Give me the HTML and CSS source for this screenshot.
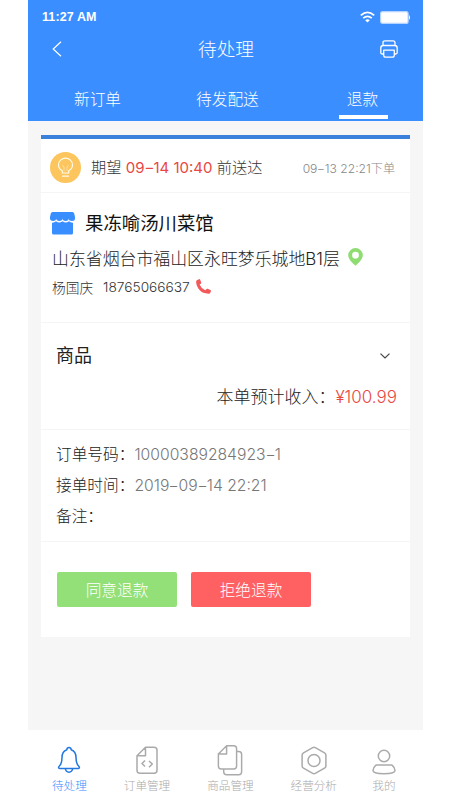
FILE: index.html
```html
<!DOCTYPE html>
<html lang="zh-CN">
<head>
<meta charset="utf-8">
<title>待处理</title>
<link rel="stylesheet" href="styles.css">
</head>
<body>
<div class="phone">
  <header class="header">
    <div class="status">
      <span class="clock">11:27 AM</span>
      <div class="status-icons">
        <svg width="15" height="12" viewBox="0 0 15 12" fill="none" stroke="#fff" stroke-width="1.7"><path d="M.8 4.4Q7.5-1.6 14.2 4.4M3.2 7.2q4.300-3.700 8.600 0"/><path d="M5.200 9.200q2.300-1.800 4.600 0L7.500 11.500z" fill="#fff" stroke="none"/></svg>
        <svg width="31" height="13" viewBox="0 0 31 13"><rect x=".6" y=".6" width="27.500" height="11.800" rx="2" fill="#fff" stroke="#b5d5ff" stroke-width="1.200"/><path d="M29 4q2 2.500 0 5z" fill="#fff"/></svg>
      </div>
    </div>
    <div class="titlebar">
      <svg class="back" width="10" height="16" viewBox="0 0 10 16" fill="none" stroke="#fff" stroke-width="1.200"><path d="M9 .7 1.200 8 9 15.300"/></svg>
      <h1>待处理</h1>
      <svg width="18" height="18" viewBox="0 0 18 18" fill="none" stroke="#fff" stroke-width="1.300" stroke-linejoin="round"><path d="M3 5.200V2.800Q3 .8 5 .8h8q2 0 2 2v2.400M3.200 14H2.300Q.8 14 .8 12.500V8q0-2.500 2.500-2.500h11.400q2.500 0 2.500 2.500v4.500q0 1.500-1.500 1.500h-.9M3.700 10.200h10.600v5q0 1.900-1.900 1.900H5.600q-1.900 0-1.900-1.900z"/></svg>
    </div>
    <nav class="tabs">
      <span class="tab">新订单</span>
      <span class="tab">待发配送</span>
      <span class="tab active">退款</span>
    </nav>
  </header>

  <main class="content">
    <article class="card">
      <section class="expect">
        <svg width="31" height="31" viewBox="0 0 31 31"><circle cx="15.500" cy="15.500" r="15.500" fill="#fcc55d"/><g fill="none" stroke="#fffbe8" stroke-width="1.200" stroke-linecap="round" stroke-linejoin="round"><path d="M12.300 21v-2.200C10 17.500 8.500 15.500 8.500 13a7 6.800 0 0 1 14 0c0 2.500-1.500 4.500-3.800 5.800V21zM12.500 24.200h6"/><path d="M14 18.500v-3.500l-1.300-1.500M17 18.500v-3.500l1.300-1.500" stroke-width=".5"/></g></svg>
        <p class="expect-text">期望 <b class="num">09<i>-</i>14 10:40</b> 前送达</p>
        <span class="placed"><span class="num">09<i>-</i>13 22:21</span>下单</span>
      </section>
      <section class="store">
        <div class="store-name">
          <svg width="25" height="23" viewBox="0 0 25 23" fill="#398eff"><path d="M2.500 0h20Q23.800 0 24.200 1.500L25 5v1.500a3.100 2.500 0 0 1-6.200 0 3.150 2.500 0 0 1-6.300 0 3.150 2.500 0 0 1-6.300 0A3.100 2.500 0 0 1 0 6.500V5L.8 1.500Q1.200 0 2.500 0z"/><path d="M2 10.700q2.400.2 4-1.400 3.200 2.600 6.500 0 3.300 2.600 6.500 0 1.600 1.600 4 1.400V21q0 1.500-1.500 1.500h-18Q2 22.500 2 21z"/></svg>
          <h2>果冻喻汤川菜馆</h2>
        </div>
        <div class="address">
          <span>山东省烟台市福山区永旺梦乐城地<span class="num">B1</span>层</span>
          <svg width="15" height="18" viewBox="0 0 15 18"><path d="M7.500 0A7.300 7.300 0 0 1 14.800 7.300C14.800 11.500 10 15.500 7.500 17.700 5 15.500.2 11.500.2 7.300A7.300 7.300 0 0 1 7.500 0zm0 3.800a3.400 3.400 0 1 0 0 6.800 3.400 3.400 0 0 0 0-6.800z" fill="#8fdd72" fill-rule="evenodd"/></svg>
        </div>
        <div class="person">
          <span>杨国庆</span><span class="num tel">18765066637</span>
          <svg width="15" height="15" viewBox="0 0 15 15" fill="#f2595b"><path d="M1.300.9 3 .2q.8-.3 1.200.5l1 2.800q.2.700-.4 1.200L3.600 5.600q1.600 4 5.600 5.700l1.300-1.300q.6-.5 1.200-.2l2.700 1.300q.7.400.5 1.200l-.6 1.400q-.4.900-1.400 1Q6 14.800 2.300 9.500-.3 5.500.2 2.300q.2-1 1.100-1.400z"/></svg>
        </div>
      </section>
      <section class="goods">
        <div class="goods-head">
          <h3>商品</h3>
          <svg width="10" height="6" viewBox="0 0 10 6" fill="none" stroke="#444" stroke-width="1.200"><path d="M.5.6 5 5 9.500.6"/></svg>
        </div>
        <p class="income">本单预计收入：<span class="num">¥100.99</span></p>
      </section>
      <section class="info">
        <p>订单号码：<span class="num">10000389284923<i>-</i>1</span></p>
        <p>接单时间：<span class="num">2019<i>-</i>09<i>-</i>14 22:21</span></p>
        <p>备注：</p>
      </section>
      <section class="actions">
        <button class="btn agree">同意退款</button>
        <button class="btn refuse">拒绝退款</button>
      </section>
    </article>
  </main>

  <footer class="nav">
    <div class="nav-item current">
      <svg width="24" height="28" viewBox="0 0 24 28" fill="none" stroke="#2478e0" stroke-width="1.500" stroke-linejoin="round"><path d="M9.800 3.200Q10 1 12 1t2.200 2.200Q19 5 19 11q0 6.500 3 9 .6.700.3 1.400-.3.700-1.200.7H2.900q-.9 0-1.200-.7-.3-.7.300-1.400 3-2.500 3-9 0-6 4.800-7.800z"/><path d="M8.300 22.200q.7 3.500 3.700 3.500t3.700-3.500"/></svg>
      <span>待处理</span>
    </div>
    <div class="nav-item">
      <svg width="24" height="28" viewBox="0 0 24 28" fill="none" stroke="#aaa" stroke-width="1.500" stroke-linejoin="round"><path d="M10.500.8H19q3 0 3 3v20q0 3-3 3H5q-3 0-3-3V9.300zM10.500.8v8.500H2M10 14l-3 3 3 3M14 14.500l3.300 3-3.300 3.300"/></svg>
      <span>订单管理</span>
    </div>
    <div class="nav-item">
      <svg width="26" height="32" viewBox="0 0 26 32" fill="none" stroke="#aaa" stroke-width="1.500" stroke-linejoin="round"><path d="M9.500.8h7.300q3 0 3 3v18q0 3-3 3H4q-3 0-3-3V9.300zM9.500.8v8.500H1M19.800 6.700H22q3 0 3 3v18q0 3-3 3H9.500q-3 0-3-3v-2.900"/></svg>
      <span>商品管理</span>
    </div>
    <div class="nav-item">
      <svg width="26" height="28" viewBox="0 0 26 28" fill="none" stroke="#aaa" stroke-width="1.500" stroke-linejoin="round"><path d="M11.700 1.200q1.300-.7 2.600 0l9.200 5.100q1.400.8 1.400 2.300v10.800q0 1.500-1.400 2.300l-9.200 5.100q-1.300.7-2.600 0l-9.200-5.100q-1.400-.8-1.400-2.300V8.600q0-1.500 1.400-2.300z"/><circle cx="13" cy="14" r="6"/></svg>
      <span>经营分析</span>
    </div>
    <div class="nav-item">
      <svg width="24" height="28" viewBox="0 0 24 28" fill="none" stroke="#aaa" stroke-width="1.500" stroke-linejoin="round"><circle cx="12" cy="9.500" r="5.700"/><path d="M4 18.600h16q3 2.400 3 5.400 0 3.200-11 3.200T1 24q0-3 3-5.400z"/></svg>
      <span>我的</span>
    </div>
  </footer>
</div>
</body>
</html>
```
FILE: styles.css
```css
* { box-sizing: border-box; margin: 0; padding: 0; }
body {
  background: #fff;
  font-family: "Noto Sans CJK SC", sans-serif;
  font-weight: 300;
  color: #222;
}
svg { display: block; flex: none; }
.phone { width: 395px; height: 800px; margin-left: 28px; display: flex; flex-direction: column; white-space: nowrap; }
.num { font-family: Inter, "Liberation Sans", sans-serif; font-weight: 300; }
.num i { display: inline-block; font-style: normal; transform: scaleX(1.5); margin: 0 1px; }

.header { height: 121px; background: #3a8eff; color: #fff; }
.status { height: 34px; padding: 0 12px 0 14px; display: flex; align-items: center; justify-content: space-between; }
.clock { font: 700 12.500px/34px "Liberation Sans", sans-serif; letter-spacing: .1px; }
.status-icons { display: flex; align-items: center; gap: 5px; }
.titlebar { height: 30px; padding: 0 25px 0 24px; display: flex; align-items: center; justify-content: space-between; }
.titlebar h1 { font-size: 18.700px; font-weight: 300; line-height: 28px; padding-bottom: 2px; }
.titlebar .back { margin-right: 10px; }
.tabs { height: 57px; padding: 14px 35px 0 46px; display: flex; }
.tab { font-size: 15.700px; line-height: 42px; height: 41px; margin-right: 75px; }
.tab.active { width: 49px; margin: 0 0 0 auto; padding-right: 2px; text-align: center; border-bottom: 4px solid #fff; }

.content { height: 609px; background: #f6f6f6; padding: 14px 13px; }
.card { height: 502px; background: #fff; border-top: 4px solid #3b80da; }
.card > section + section { border-top: 1px solid #f5f5f5; }
.expect { height: 53px; padding: 4px 15px 0 9px; display: flex; align-items: center; }
.expect-text { margin-left: 10px; padding-bottom: 3px; font-size: 15.200px; color: #333; }
.expect-text b { color: #e94743; font-size: 15px; font-weight: 400; margin: 0 1px; }
.placed { margin-left: auto; padding-bottom: 1px; font-size: 12.100px; color: #888; }

.store { height: 130px; padding: 12px 0 0 9px; }
.store-name { height: 37px; display: flex; align-items: center; gap: 10px; }
.store-name h2 { font-size: 18.400px; font-weight: 400; color: #111; padding-bottom: 3px; }
.address { height: 30px; padding-left: 2px; display: flex; align-items: center; gap: 8px; font-size: 16.900px; }
.person { height: 29px; padding-left: 2px; display: flex; align-items: center; font-size: 13.700px; color: #333; }
.tel { margin: 0 6px 0 10px; }

.goods { height: 107px; padding: 12px 13px 0 15px; }
.goods-head { height: 42px; display: flex; align-items: center; justify-content: space-between; padding-right: 7px; }
.goods-head h3 { font-size: 18px; font-weight: 400; padding-bottom: 4px; }
.income { line-height: 38px; font-size: 17px; text-align: right; }
.income .num { color: #e94743; }

.info { height: 112px; padding: 8px 0 0 15px; }
.info p { height: 31px; line-height: 31px; font-size: 15.700px; }
.info .num { color: #777; }

.actions { height: 96px; padding: 30px 16px; display: flex; gap: 14px; }
.btn { width: 120px; height: 35px; border: 0; border-radius: 2px; color: #fff; font: 300 15.700px/35px "Noto Sans CJK SC", sans-serif; }
.agree { background: #93e078; }
.refuse { background: #ff6163; }

.nav { height: 70px; display: flex; padding: 0 0 0 24px; background: #fff; }
.nav-item { display: flex; flex-direction: column; align-items: center; padding-top: 15px; margin-right: 37px; font-size: 11.600px; color: #aaa; }
.nav-item svg { height: 31px; overflow: visible; }
.nav-item:nth-child(4) { margin-right: 35px; }
.nav-item:last-child { margin-right: 0; }
.nav-item span { line-height: 18px; }
.nav-item.current { color: #3a8eff; }
```
